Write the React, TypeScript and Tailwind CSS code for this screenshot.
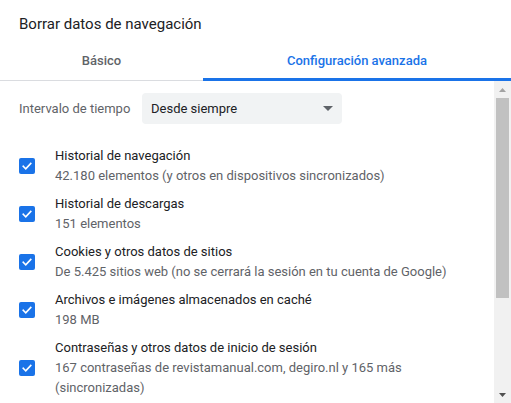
import React from 'react';

const items = [
  { title: 'Historial de navegación', lines: ['42.180 elementos (y otros en dispositivos sincronizados)'] },
  { title: 'Historial de descargas', lines: ['151 elementos'] },
  { title: 'Cookies y otros datos de sitios', lines: ['De 5.425 sitios web (no se cerrará la sesión en tu cuenta de Google)'] },
  { title: 'Archivos e imágenes almacenados en caché', lines: ['198 MB'] },
  {
    title: 'Contraseñas y otros datos de inicio de sesión',
    lines: ['167 contraseñas de revistamanual.com, degiro.nl y 165 más', '(sincronizadas)'],
  },
];

const Checkbox: React.FC = () => (
  <div className="flex h-4 w-4 shrink-0 items-center justify-center rounded-[2px] bg-[#1a73e8]">
    <svg width="12" height="12" viewBox="0 0 24 24" fill="none">
      <path d="M4.5 12.5l5 5L19.5 7" stroke="white" strokeWidth="3.2" strokeLinecap="square" />
    </svg>
  </div>
);

const App: React.FC = () => {
  return (
    <div
      className="flex h-[403px] w-[511px] flex-col overflow-hidden bg-white text-[#202124]"
      style={{ fontFamily: 'Roboto, "Liberation Sans", sans-serif' }}
    >
      {/* Title */}
      <div className="h-[44px] pl-[19px] pt-[14px] text-[15px] leading-[20px]">Borrar datos de navegación</div>

      {/* Tabs */}
      <div className="flex h-[37px] border-b border-[#dadce0]">
        <div className="flex w-[203px] items-start justify-center pt-[7px] text-[13px] font-medium text-[#5f6368]">
          Básico
        </div>
        <div className="relative flex flex-1 items-start justify-center pt-[7px] text-[13px] font-medium text-[#1a73e8]">
          Configuración avanzada
          <div className="absolute bottom-[-1px] left-0 right-0 h-[3px] bg-[#1a73e8]" />
        </div>
      </div>

      {/* Body */}
      <div className="flex flex-1 overflow-hidden">
        <div className="flex-1 pl-[19px] pt-[12px]">
          <div className="flex items-center">
            <span className="w-[123px] text-[13px] text-[#5f6368]">Intervalo de tiempo</span>
            <div className="flex h-[31px] w-[200px] items-center justify-between rounded-[4px] bg-[#f1f3f4] pl-[9px] pr-[9px] text-[13px]">
              <span>Desde siempre</span>
              <svg width="10" height="5" viewBox="0 0 10 5">
                <path d="M0 0h10L5 5z" fill="#5f6368" />
              </svg>
            </div>
          </div>

          <div className="mt-[18px] flex flex-col">
            {items.map((item) => (
              <div key={item.title} className="flex items-center py-[4px]">
                <div className="w-[36px]">
                  <Checkbox />
                </div>
                <div className="text-[13px] leading-[20px]">
                  <div>{item.title}</div>
                  {item.lines.map((l) => (
                    <div key={l} className="text-[#5f6368]">
                      {l}
                    </div>
                  ))}
                </div>
              </div>
            ))}
          </div>
        </div>

        {/* Scrollbar */}
        <div className="flex w-[17px] flex-col items-center bg-[#f1f1f1]">
          <div className="flex h-[17px] items-center justify-center">
            <svg width="7" height="4" viewBox="0 0 7 4">
              <path d="M0 4h7L3.5 0z" fill="#a3a3a3" />
            </svg>
          </div>
          <div className="h-[200px] w-[13px] bg-[#c1c1c1]" />
          <div className="flex-1" />
          <div className="flex h-[17px] items-center justify-center">
            <svg width="7" height="4" viewBox="0 0 7 4">
              <path d="M0 0h7L3.5 4z" fill="#505050" />
            </svg>
          </div>
        </div>
      </div>
    </div>
  );
};

export default App;
